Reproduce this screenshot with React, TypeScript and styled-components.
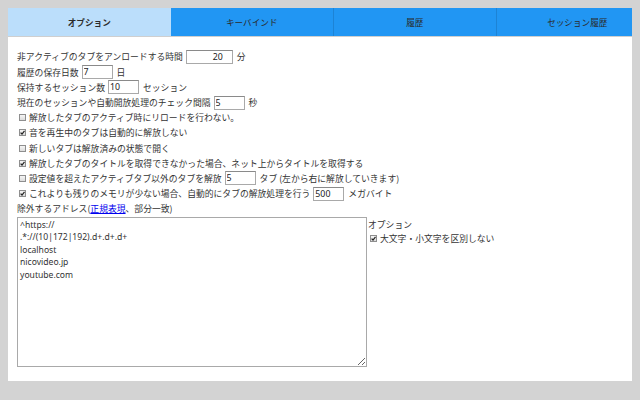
import React from "react";
import styled, { createGlobalStyle } from "styled-components";

const GlobalStyle = createGlobalStyle`
  html, body { margin: 0; padding: 0; }
  body {
    margin: 8px;
    background: #d3d3d3;
    overflow: hidden;
    font-family: "Noto Sans CJK JP", "Noto Sans", sans-serif;
    color: #333;
  }
`;

const Card = styled.div`
  width: 650px;
  height: 373px;
  background: #fff;
  box-shadow: 0 1px 1px rgba(0, 0, 0, 0.45), 0 2px 1px rgba(0, 0, 0, 0.2);
  box-sizing: border-box;
`;

const TabBar = styled.div`
  display: grid;
  grid-template-columns: repeat(4, 1fr);
  height: 29px;
  border-bottom: 1px solid #cfcfcf;
  box-sizing: border-box;
`;

const Tab = styled.div<{ $active?: boolean }>`
  display: flex;
  align-items: center;
  justify-content: center;
  background: ${(p) => (p.$active ? "#bbdefb" : "#2196f3")};
  border-left: ${(p) => (p.$active ? "none" : "1px solid rgba(0,0,0,0.12)")};
  font-size: 8.6px;
  font-weight: ${(p) => (p.$active ? 700 : 400)};
  color: #2a2a2a;
  &:nth-child(2) { border-left: none; }
`;

const Content = styled.div`
  padding: 12.4px 0 0 9px;
  font-size: 8.8px;
`;

const Row = styled.div<{ $indent?: boolean }>`
  display: flex;
  align-items: center;
  height: 15.2px;
  white-space: nowrap;
  padding-left: ${(p) => (p.$indent ? "2px" : "0")};
`;

const Field = styled.input<{ $w: number; $right?: boolean }>`
  box-sizing: border-box;
  width: ${(p) => p.$w}px;
  height: 14px;
  margin: 0 4px 0 3px;
  padding: 0 ${(p) => (p.$right ? "9px" : "1px")} 0 1px;
  border: 1px solid #a9a9a9;
  border-top-color: #8a8a8a;
  font-family: "Noto Sans", sans-serif;
  font-size: 8.8px;
  color: #222;
  text-align: ${(p) => (p.$right ? "right" : "left")};
  outline: none;
`;

const Box = styled.span`
  display: inline-flex;
  align-items: center;
  justify-content: center;
  width: 7px;
  height: 7px;
  box-sizing: border-box;
  border: 1px solid #8e8e8e;
  background: linear-gradient(#f6f6f6, #dcdcdc);
  margin-right: 3px;
  flex: none;
`;

const Link = styled.a`
  color: #0000ee;
  text-decoration: underline;
`;

const Bottom = styled.div`
  display: flex;
  align-items: flex-start;
  margin-top: 0.5px;
`;

const Area = styled.textarea`
  box-sizing: border-box;
  width: 350px;
  height: 150px;
  margin: 0;
  padding: 1px 2px;
  border: 1px solid #a9a9a9;
  font-family: "Noto Sans", sans-serif;
  font-size: 8.6px;
  line-height: 12.5px;
  color: #333;
  resize: both;
  outline: none;
`;

const Options = styled.div`
  padding-top: 1px;
  margin-left: 1px;
`;

const OptTitle = styled.div`
  height: 14px;
  display: flex;
  align-items: center;
`;

const OptRow = styled.div`
  display: flex;
  align-items: center;
  height: 14px;
  padding-left: 2px;
`;

function Check({ checked }: { checked?: boolean }) {
  return (
    <Box>
      {checked && (
        <svg width="5" height="5" viewBox="0 0 5 5">
          <path d="M0.6 2.6 L2 4 L4.5 0.8" stroke="#222" strokeWidth="1.2" fill="none" />
        </svg>
      )}
    </Box>
  );
}

const tabs = ["オプション", "キーバインド", "履歴", "セッション履歴"];

const addresses = [
  "^https://",
  ".*://(10|172|192).d+.d+.d+",
  "localhost",
  "nicovideo.jp",
  "youtube.com",
].join("\n");

export default function App() {
  return (
    <>
      <GlobalStyle />
      <Card>
        <TabBar>
          {tabs.map((t, i) => (
            <Tab key={t} $active={i === 0}>
              {t}
            </Tab>
          ))}
        </TabBar>
        <Content>
          <Row>
            非アクティブのタブをアンロードする時間
            <Field $w={47} $right defaultValue="20" />分
          </Row>
          <Row>
            履歴の保存日数<Field $w={31} defaultValue="7" />日
          </Row>
          <Row>
            保持するセッション数<Field $w={31} defaultValue="10" />セッション
          </Row>
          <Row>
            現在のセッションや自動開放処理のチェック間隔<Field $w={31} defaultValue="5" />秒
          </Row>
          <Row $indent>
            <Check />解放したタブのアクティブ時にリロードを行わない。
          </Row>
          <Row $indent>
            <Check checked />音を再生中のタブは自動的に解放しない
          </Row>
          <Row $indent>
            <Check />新しいタブは解放済みの状態で開く
          </Row>
          <Row $indent>
            <Check checked />解放したタブのタイトルを取得できなかった場合、ネット上からタイトルを取得する
          </Row>
          <Row $indent>
            <Check />設定値を超えたアクティブタブ以外のタブを解放
            <Field $w={31} defaultValue="5" />タブ (左から右に解放していきます)
          </Row>
          <Row $indent>
            <Check checked />これよりも残りのメモリが少ない場合、自動的にタブの解放処理を行う
            <Field $w={31} defaultValue="500" />メガバイト
          </Row>
          <Row>
            除外するアドレス(<Link href="#">正規表現</Link>、部分一致)
          </Row>
          <Bottom>
            <Area defaultValue={addresses} />
            <Options>
              <OptTitle>オプション</OptTitle>
              <OptRow>
                <Check checked />大文字・小文字を区別しない
              </OptRow>
            </Options>
          </Bottom>
        </Content>
      </Card>
    </>
  );
}
